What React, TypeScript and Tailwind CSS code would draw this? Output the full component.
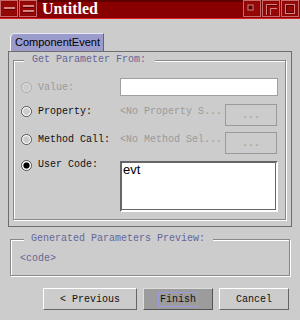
import React from 'react';

const mono = { fontFamily: '"Liberation Mono", "DejaVu Sans Mono", monospace' };

function Radio({ checked, disabled }: { checked?: boolean; disabled?: boolean }) {
  const ring = disabled ? '#a8a8a8' : '#555555';
  return (
    <svg width="11" height="11" viewBox="0 0 11 11" className="shrink-0">
      <circle cx="5.5" cy="5.5" r="5" fill="#cccccc" stroke={ring} strokeWidth="1" />
      <circle cx="5.5" cy="5.5" r="4" fill="none" stroke={disabled ? '#dddddd' : '#ffffff'} strokeWidth="1" />
      {checked && <circle cx="5.5" cy="5.5" r="3" fill="#000000" />}
    </svg>
  );
}

// title bar buttons
function TitleButton({ kind }: { kind: 'bar' | 'bars' | 'menu' | 'restore' | 'max' }) {
  return (
    <svg width="19" height="18" viewBox="0 0 19 18" className="shrink-0">
      <rect x="0" y="0" width="19" height="18" fill="#8a0000" />
      <rect x="0.5" y="0.5" width="17" height="16" fill="none" stroke="#c86a6a" />
      <rect x="1.5" y="1.5" width="15" height="14" fill="#940808" />
      {kind === 'bar' && (
        <>
          <rect x="4" y="7" width="11" height="2" fill="#d88080" />
          <rect x="4" y="9" width="11" height="1" fill="#5a0000" />
        </>
      )}
      {kind === 'bars' && (
        <>
          <rect x="4" y="5" width="11" height="2" fill="#d88080" />
          <rect x="4" y="7" width="11" height="1" fill="#5a0000" />
          <rect x="4" y="10" width="11" height="2" fill="#d88080" />
          <rect x="4" y="12" width="11" height="1" fill="#5a0000" />
        </>
      )}
      {kind === 'menu' && (
        <>
          <rect x="5" y="5" width="5" height="5" fill="#5a0000" stroke="#d88080" strokeWidth="1" />
        </>
      )}
      {kind === 'restore' && (
        <>
          <path d="M4.5 15 V4.5 H15" fill="none" stroke="#d88080" />
          <path d="M8.5 15 V8.5 H15" fill="none" stroke="#d88080" />
          <path d="M5.5 15 V5.5 H15" fill="none" stroke="#5a0000" />
        </>
      )}
      {kind === 'max' && (
        <>
          <rect x="4.5" y="4.5" width="9" height="9" fill="none" stroke="#d88080" />
          <rect x="5.5" y="5.5" width="7" height="7" fill="none" stroke="#5a0000" />
        </>
      )}
    </svg>
  );
}

export default function App() {
  return (
    <div className="w-[300px] h-[320px] bg-[#cccccc] flex flex-col overflow-hidden" style={mono}>
      {/* Title bar */}
      <div className="h-[19px] flex items-stretch bg-[#880000] border-b border-[#e02020] border-t-2 border-t-[#5e0000]">
        <div className="flex -mt-[2px]">
          <TitleButton kind="bar" />
          <TitleButton kind="bars" />
        </div>
        <div
          className="ml-[4px] -mt-[2px] text-white font-bold text-[16px] leading-[18px]"
          style={{ fontFamily: '"Liberation Serif", serif' }}
        >
          Untitled
        </div>
        <div className="ml-auto flex -mt-[2px]">
          <TitleButton kind="menu" />
          <TitleButton kind="restore" />
          <TitleButton kind="max" />
        </div>
      </div>

      <div className="px-[8px] flex flex-col">
        {/* Tab */}
        <div className="mt-[14px] ml-[2px] w-[94px] h-[18px] bg-[#9c9ccc] border-t border-l border-t-[#e8e8f4] border-l-white border-r border-r-[#666666] rounded-tl-[5px] pl-[4px] text-[11px] leading-[16px] text-black" style={{ fontFamily: '"Liberation Sans", Arial, sans-serif' }}>
          ComponentEvent
        </div>

        {/* Tab panel */}
        <div className="h-[176px] border border-[#6e6e6e] pl-[4px] pt-[2px]">
          <fieldset className="w-[273px] h-[166px] border border-[#888888] shadow-[inset_1px_1px_0_#ffffff,1px_1px_0_#ffffff] pt-[12px] pl-[7px]">
            <legend className="ml-[3px] pl-[8px] pr-[9px] bg-[#cccccc] text-[10px] leading-[12px] text-[#666699]">
              Get Parameter From:
            </legend>

            {/* Value */}
            <div className="flex items-center h-[18px]">
              <Radio disabled />
              <span className="ml-[6px] w-[82px] text-[10px] text-[#9a9a9a]">Value:</span>
              <div className="w-[158px] h-[18px] bg-white border border-[#a0a0a0]" />
            </div>

            {/* Property */}
            <div className="flex items-start h-[22px] mt-[8px]">
              <div className="mt-[2px]"><Radio /></div>
              <span className="ml-[6px] w-[82px] text-[10px] leading-[16px] text-[#111111]">Property:</span>
              <span className="w-[105px] text-[10px] leading-[16px] text-[#9a9a9a] whitespace-nowrap">&lt;No Property S...</span>
              <div className="w-[52px] h-[22px] border border-[#9a9a9a] flex items-center justify-center text-[10px] text-[#9a9a9a]">...</div>
            </div>

            {/* Method Call */}
            <div className="flex items-start h-[22px] mt-[6px]">
              <div className="mt-[2px]"><Radio /></div>
              <span className="ml-[6px] w-[82px] text-[10px] leading-[16px] text-[#111111]">Method Call:</span>
              <span className="w-[105px] text-[10px] leading-[16px] text-[#9a9a9a] whitespace-nowrap">&lt;No Method Sel...</span>
              <div className="w-[52px] h-[22px] border border-[#9a9a9a] flex items-center justify-center text-[10px] text-[#9a9a9a]">...</div>
            </div>

            {/* User Code */}
            <div className="flex items-start mt-[7px]">
              <div className="-mt-[1px]"><Radio checked /></div>
              <span className="ml-[6px] w-[82px] -mt-[4px] text-[10px] leading-[16px] text-[#111111]">User Code:</span>
              <div
                className="w-[158px] h-[51px] bg-white border-2 border-t-[#666666] border-l-[#666666] border-r-white border-b-white shadow-[inset_-1px_-1px_0_#666666] pl-[1px] text-[13px] leading-[14px] text-black"
                style={{ fontFamily: '"Liberation Sans", Arial, sans-serif' }}
              >
                evt
              </div>
            </div>
          </fieldset>
        </div>

        {/* Preview */}
        <fieldset className="mt-[6px] ml-[2px] w-[280px] h-[43px] border border-[#888888] shadow-[inset_1px_1px_0_#ffffff,1px_1px_0_#ffffff] pt-[8px] pl-[9px]">
          <legend className="ml-[4px] pl-[7px] pr-[8px] bg-[#cccccc] text-[10px] leading-[12px] text-[#666699]">
            Generated Parameters Preview:
          </legend>
          <div className="text-[10px] leading-[12px] text-[#666699]">&lt;code&gt;</div>
        </fieldset>

        {/* Buttons */}
        <div className="mt-[12px] flex justify-end gap-[6px] pr-[3px]">
          <button className="w-[94px] h-[22px] bg-[#cccccc] border border-t-white border-l-white border-r-[#666666] border-b-[#666666] text-[10px] text-[#111111]">
            &lt; Previous
          </button>
          <button className="w-[70px] h-[22px] bg-[#9c9c9c] border border-t-[#dddddd] border-l-[#dddddd] border-r-[#555555] border-b-[#555555] text-[10px] text-[#111111] flex items-center justify-center">
            <span className="border border-[#9c9cdc] px-[1px] leading-[13px]">Finish</span>
          </button>
          <button className="w-[70px] h-[22px] bg-[#cccccc] border border-t-white border-l-white border-r-[#666666] border-b-[#666666] text-[10px] text-[#111111]">
            Cancel
          </button>
        </div>
      </div>
    </div>
  );
}
